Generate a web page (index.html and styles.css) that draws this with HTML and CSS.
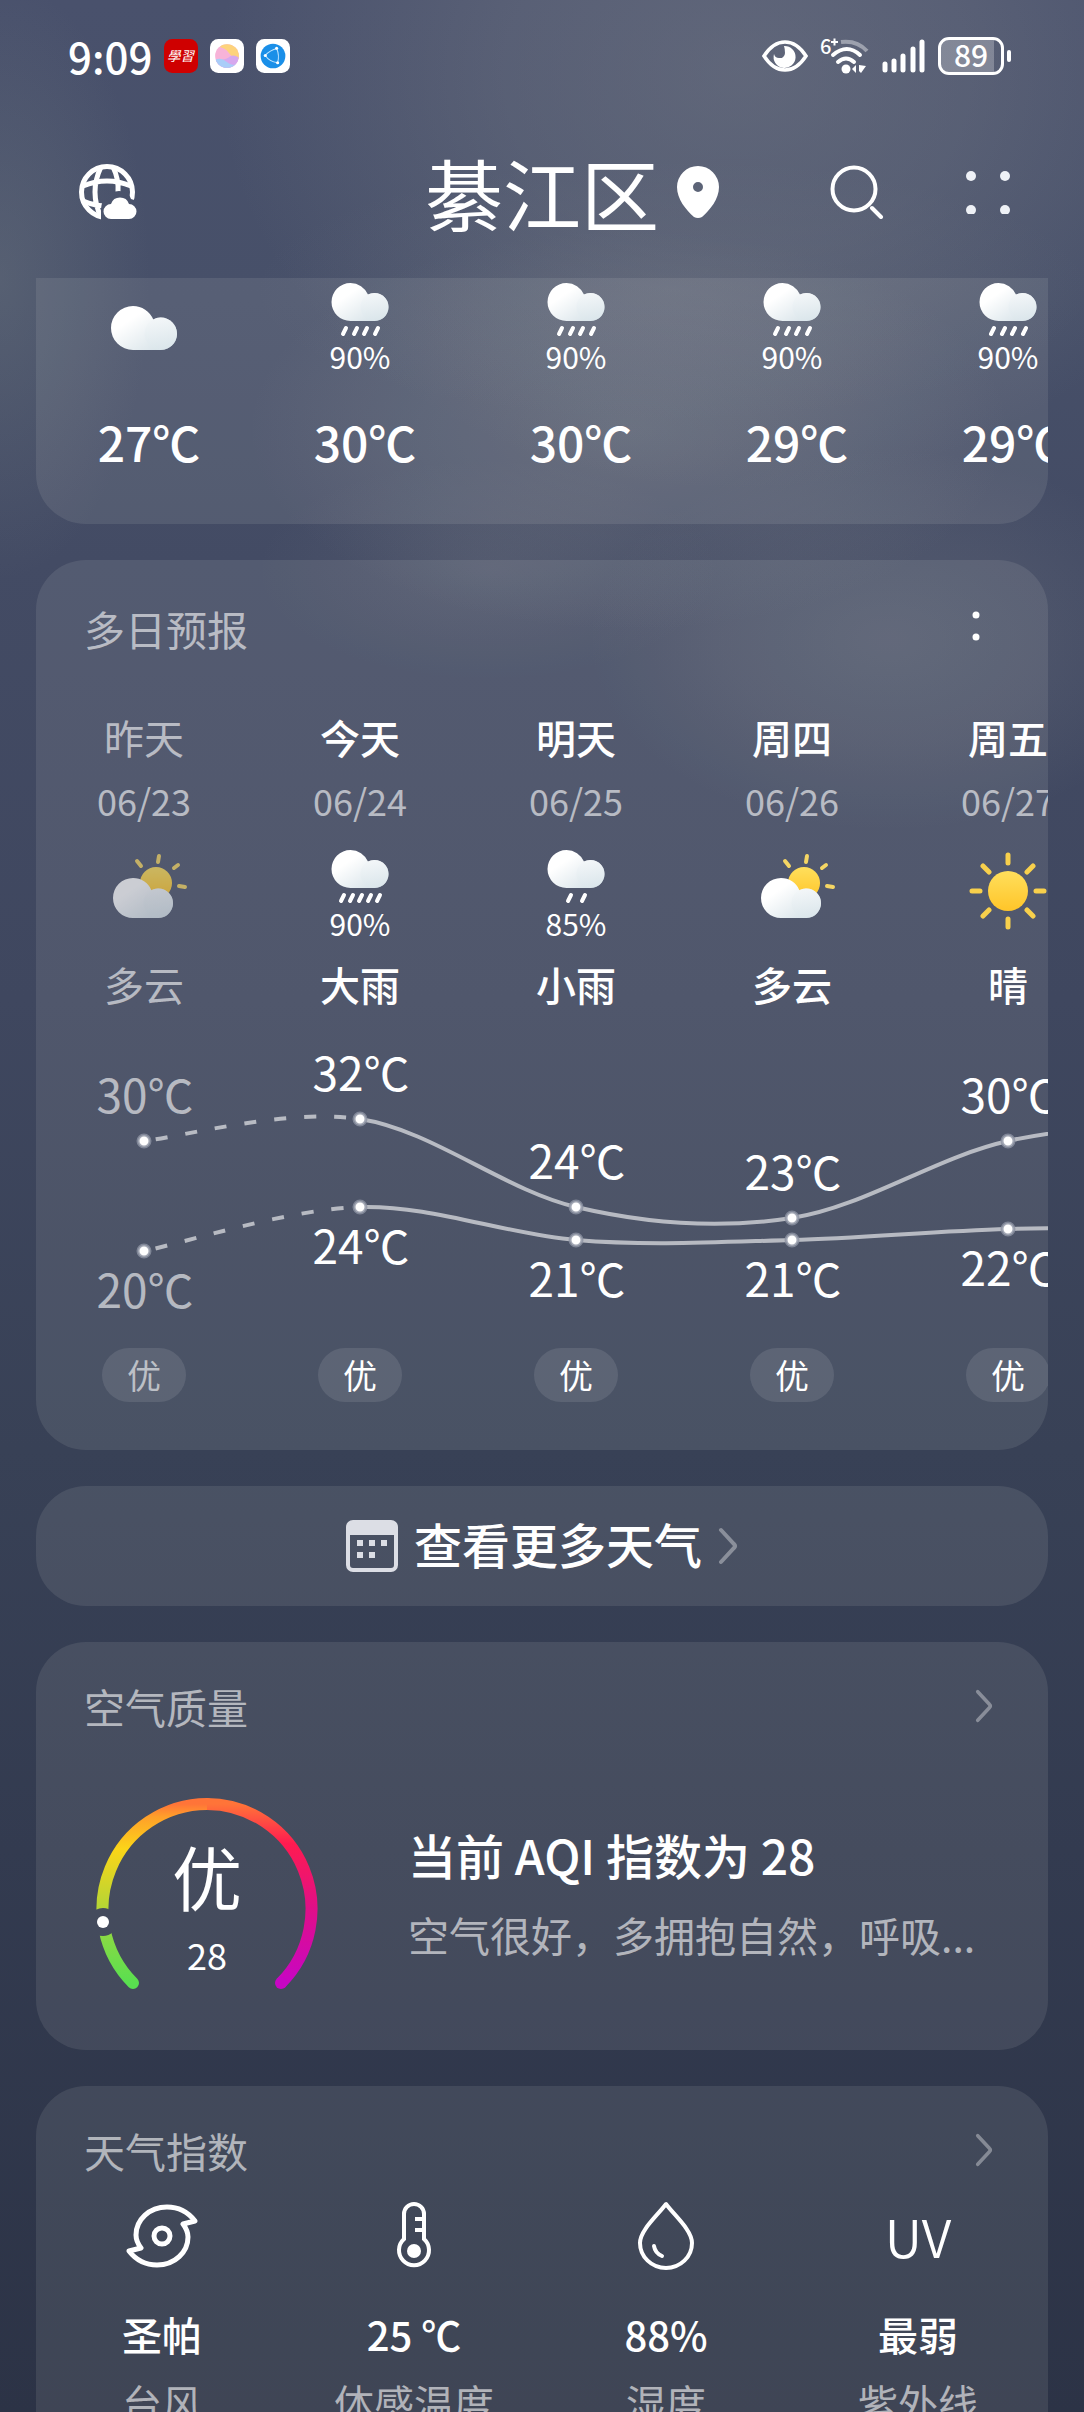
FILE: index.html
```html
<!DOCTYPE html>
<html lang="zh-CN">
<head>
  <meta charset="UTF-8">
  <meta name="viewport" content="width=device-width, initial-scale=1">
  <title>綦江区</title>
  <link rel="stylesheet" href="styles.css">
</head>
<body>
  <!-- shared symbols -->
  <svg class="sprite" aria-hidden="true">
    <defs>
      <linearGradient id="cloud-big" x1="0" y1="0" x2="1" y2="1">
        <stop offset="0.3" stop-color="#fff"/>
        <stop offset="1" stop-color="#cfdde4"/>
      </linearGradient>
      <linearGradient id="cloud-small" x1="0" y1="0" x2="0" y2="1">
        <stop offset="0" stop-color="#f4f7f9"/>
        <stop offset="1" stop-color="#dce7ec"/>
      </linearGradient>
      <linearGradient id="sun-fill" x1="0" y1="0" x2="0" y2="1">
        <stop offset="0" stop-color="#ffdf5c"/>
        <stop offset="1" stop-color="#ffc529"/>
      </linearGradient>
      <symbol id="cloud" viewBox="0 0 57 38">
        <path d="M19 0a19 19 0 0 1 17.500 11.600A14 14 0 1 1 43 38H19a19 19 0 0 1 0-38z" fill="url(#cloud-big)"/>
        <circle cx="43" cy="24" r="14" fill="url(#cloud-small)" opacity="0.7"/>
      </symbol>
      <symbol id="partly" viewBox="0 0 92 92">
        <circle cx="58" cy="33" r="16" fill="url(#sun-fill)"/>
        <path d="M60 12l1-6M43 16l-4-5M76 18l4-3M81 36l6 1" stroke="#f5d664" stroke-width="4" stroke-linecap="round"/>
        <use href="#cloud" x="15" y="28" width="60" height="40"/>
      </symbol>
      <symbol id="sunny" viewBox="0 0 92 92">
        <circle cx="46" cy="41" r="20" fill="url(#sun-fill)"/>
        <g stroke="#f8d04c" stroke-width="5" stroke-linecap="round">
          <path d="M46 13V5M46 77v-8M18 41h-8M82 41h-8M27 22l-6-6M65 22l6-6M27 60l-6 6M65 60l6 6"/>
        </g>
      </symbol>
      <symbol id="rain-2" viewBox="0 0 92 54">
        <use href="#cloud" x="17" y="0" width="58" height="38"/>
        <path d="M38 51l3-6M52 51l3-6" stroke="#fff" stroke-width="4" stroke-linecap="round"/>
      </symbol>
      <symbol id="rain-4" viewBox="0 0 92 54">
        <use href="#cloud" x="17" y="0" width="58" height="38"/>
        <path d="M29 51l3-6M40 51l3-6M50 51l3-6M61 51l3-6" stroke="#fff" stroke-width="4" stroke-linecap="round"/>
      </symbol>
      <symbol id="rain-5" viewBox="0 0 92 54">
        <use href="#cloud" x="17" y="0" width="58" height="38"/>
        <path d="M27 51l3-6M36 51l3-6M45 51l3-6M54 51l3-6M63 51l3-6" stroke="#fff" stroke-width="4" stroke-linecap="round"/>
      </symbol>
      <symbol id="chevron" viewBox="0 0 20 38">
        <path d="M3 3l13 14q2 2 0 4L3 35" fill="none" stroke="currentColor" stroke-width="4" stroke-linecap="round"/>
      </symbol>
    </defs>
  </svg>

  <div class="app">
    <div class="status-bar">
      <div class="status-left">
        <span class="clock">9:09</span>
        <svg class="app-icon" viewBox="0 0 33 33">
          <rect width="33" height="33" rx="8" fill="#cf0000"/>
          <text x="16" y="21" text-anchor="middle" class="app-text">學習</text>
        </svg>
        <svg class="app-icon" viewBox="0 0 33 33">
          <defs>
            <clipPath id="ball"><circle cx="16.500" cy="16.500" r="11.500"/></clipPath>
          </defs>
          <rect width="33" height="33" rx="8" fill="#fff"/>
          <g clip-path="url(#ball)">
            <rect width="33" height="33" fill="#f7b3d8"/>
            <path d="M10 4h20v16q-8-1-12-7-3-4-8-5z" fill="#fdd37c"/>
            <path d="M28 18q-6-4-10 0-4 3-14 2v12h24z" fill="#d6a8ee"/>
            <path d="M4 21q6-4 12 1t10 2v9H4z" fill="#a9cdf8"/>
          </g>
        </svg>
        <svg class="app-icon" viewBox="0 0 33 33">
          <rect width="33" height="33" rx="8" fill="#fff"/>
          <circle cx="16.500" cy="16.500" r="12" fill="#1a8fe8"/>
          <path d="M9 16Q13 11 21 9M9 16Q13 22 21 23M20 9q3 7 1 14" fill="none" stroke="#bfe4ff" stroke-width="1"/>
          <circle cx="9" cy="16" r="1.500" fill="#fff"/>
          <circle cx="20" cy="9" r="1.500" fill="#fff"/>
          <circle cx="21" cy="23" r="1.500" fill="#fff"/>
        </svg>
      </div>
      <div class="status-right">
        <svg width="46" height="32" viewBox="0 0 46 32">
          <path d="M2 16Q11 2 23 2t21 14Q35 30 23 30T2 16z" fill="none" stroke="#fff" stroke-width="3.500"/>
          <path d="M22 6a11 11 0 1 1-10 8q1 4 5 4a5 5 0 0 0 6-5q0-4-1-7z" fill="#fff"/>
        </svg>
        <svg width="50" height="38" viewBox="0 0 50 38">
          <text x="0" y="17" class="wifi-text">6</text>
          <path d="M11 5h7M14.500 1.500v7" stroke="#fff" stroke-width="2"/>
          <path d="M21 5q16-2 26 9" fill="none" stroke="#fff" stroke-opacity="0.4" stroke-width="4"/>
          <path d="M13 18q14-12 27 0" fill="none" stroke="#fff" stroke-width="4" stroke-linecap="round"/>
          <path d="M18 25q8-7 16 0" fill="none" stroke="#fff" stroke-width="4" stroke-linecap="round"/>
          <circle cx="26" cy="32" r="4.500" fill="#fff"/>
          <path d="M32 32l4-4v8zM39 28l7 1-5 7-2-2z" fill="#fff"/>
        </svg>
        <svg width="44" height="34" viewBox="0 0 44 34">
          <path d="M3 31v-6M12 31V22M21 31V17M31 31V10M40 31V3" stroke="#fff" stroke-width="5" stroke-linecap="round"/>
        </svg>
        <div class="battery"><span>89</span></div>
      </div>
    </div>

    <header class="top-bar">
      <button class="icon-btn" type="button" aria-label="城市">
        <svg width="66" height="58" viewBox="0 0 66 58">
          <defs>
            <mask id="globe-cut">
              <rect width="66" height="58" fill="#fff"/>
              <path d="M27 60V46q0-8 7-10 3-8 11-8 9 0 12 8 6 1 9 6v18z" fill="#000"/>
            </mask>
          </defs>
          <g mask="url(#globe-cut)" fill="none" stroke="#fff" stroke-width="5">
            <circle cx="33" cy="29" r="25.500"/>
            <path d="M27 4Q15 29 27 54M39 4q6 12 5 26M9 23Q33 13 57 23M9 38q12 5 24 5"/>
          </g>
          <path d="M37 56a7.500 7.500 0 0 1 0-15 9.500 9.500 0 0 1 18 0 7.500 7.500 0 0 1 0 15z" fill="#fff"/>
        </svg>
      </button>
      <h1>綦江区</h1>
      <div class="top-right">
        <svg class="pin" width="42" height="52" viewBox="0 0 42 52">
          <path d="M21 0a21 21 0 0 1 21 21c0 12-9 23-17 30q-4 2-8 0C9 44 0 33 0 21A21 21 0 0 1 21 0zm0 16a5 5 0 1 0 0 10 5 5 0 0 0 0-10z" fill="#fff"/>
        </svg>
        <div class="actions">
          <button class="icon-btn" type="button" aria-label="搜索">
            <svg width="54" height="54" viewBox="0 0 54 54">
              <circle cx="24" cy="24" r="21.500" fill="none" stroke="#fff" stroke-width="4"/>
              <path d="M42 43l9 9" stroke="#fff" stroke-width="4" stroke-linecap="round"/>
            </svg>
          </button>
          <button class="icon-btn" type="button" aria-label="菜单">
            <svg width="44" height="44" viewBox="0 0 44 44" fill="#eef1f6">
              <circle cx="5" cy="6" r="5"/><circle cx="39" cy="6" r="5"/>
              <circle cx="5" cy="40" r="5"/><circle cx="39" cy="40" r="5"/>
            </svg>
          </button>
        </div>
      </div>
    </header>

    <main class="content">
      <section class="card hourly">
        <ul class="columns">
          <li class="col">
            <div class="slot"><svg width="92" height="92" viewBox="0 0 92 92"><use href="#cloud" x="13" y="23" width="66" height="44"/></svg></div>
            <span class="hour-temp">27℃</span>
          </li>
          <li class="col">
            <div class="slot"><svg width="92" height="54"><use href="#rain-4"/></svg><span class="chance">90%</span></div>
            <span class="hour-temp">30℃</span>
          </li>
          <li class="col">
            <div class="slot"><svg width="92" height="54"><use href="#rain-4"/></svg><span class="chance">90%</span></div>
            <span class="hour-temp">30℃</span>
          </li>
          <li class="col">
            <div class="slot"><svg width="92" height="54"><use href="#rain-4"/></svg><span class="chance">90%</span></div>
            <span class="hour-temp">29℃</span>
          </li>
          <li class="col">
            <div class="slot"><svg width="92" height="54"><use href="#rain-4"/></svg><span class="chance">90%</span></div>
            <span class="hour-temp">29℃</span>
          </li>
        </ul>
      </section>

      <section class="card daily">
        <div class="card-head">
          <h2>多日预报</h2>
          <button class="icon-btn" type="button" aria-label="更多">
            <svg width="36" height="36" viewBox="0 0 36 36" fill="#fff">
              <circle cx="18" cy="5" r="3.500"/><circle cx="18" cy="27" r="3.500"/>
            </svg>
          </button>
        </div>
        <ul class="columns">
          <li class="col past">
            <span class="day">昨天</span><span class="date">06/23</span>
            <div class="slot"><svg width="92" height="92"><use href="#partly"/></svg></div>
            <span class="day">多云</span>
          </li>
          <li class="col">
            <span class="day">今天</span><span class="date">06/24</span>
            <div class="slot"><svg width="92" height="54"><use href="#rain-5"/></svg><span class="chance">90%</span></div>
            <span class="day">大雨</span>
          </li>
          <li class="col">
            <span class="day">明天</span><span class="date">06/25</span>
            <div class="slot"><svg width="92" height="54"><use href="#rain-2"/></svg><span class="chance">85%</span></div>
            <span class="day">小雨</span>
          </li>
          <li class="col">
            <span class="day">周四</span><span class="date">06/26</span>
            <div class="slot"><svg width="92" height="92"><use href="#partly"/></svg></div>
            <span class="day">多云</span>
          </li>
          <li class="col">
            <span class="day">周五</span><span class="date">06/27</span>
            <div class="slot"><svg width="92" height="92"><use href="#sunny"/></svg></div>
            <span class="day">晴</span>
          </li>
        </ul>

        <!-- 216px per day, 11px per degree -->
        <svg class="chart" width="1080" height="338" viewBox="0 0 1080 338">
          <g class="line">
            <path class="dashed" d="M108 131C144 127 252 98 324 109"/>
            <path d="M324 109C396 120 468 180 540 197S684 219 756 208 900 147 972 131 1152 111 1188 109"/>
            <path class="dashed" d="M108 241C144 234 252 199 324 197"/>
            <path d="M324 197C396 195 468 224 540 230S684 232 756 230 900 221 972 219 1152 219 1188 219"/>
          </g>
          <g class="points">
            <circle cx="108" cy="131" r="6"/><circle cx="324" cy="109" r="6"/><circle cx="540" cy="197" r="6"/><circle cx="756" cy="208" r="6"/><circle cx="972" cy="131" r="6"/>
            <circle cx="108" cy="241" r="6"/><circle cx="324" cy="197" r="6"/><circle cx="540" cy="230" r="6"/><circle cx="756" cy="230" r="6"/><circle cx="972" cy="219" r="6"/>
          </g>
          <g class="temps">
            <text class="past-temp" x="109" y="103">30℃</text>
            <text x="325" y="81">32℃</text>
            <text x="541" y="169">24℃</text>
            <text x="757" y="180">23℃</text>
            <text x="973" y="103">30℃</text>
            <text class="past-temp" x="109" y="298">20℃</text>
            <text x="325" y="254">24℃</text>
            <text x="541" y="287">21℃</text>
            <text x="757" y="287">21℃</text>
            <text x="973" y="276">22℃</text>
          </g>
        </svg>

        <ul class="columns">
          <li class="col"><span class="badge muted">优</span></li>
          <li class="col"><span class="badge">优</span></li>
          <li class="col"><span class="badge">优</span></li>
          <li class="col"><span class="badge">优</span></li>
          <li class="col"><span class="badge">优</span></li>
        </ul>
      </section>

      <a class="card more" href="#more">
        <svg width="52" height="52" viewBox="0 0 52 52">
          <rect x="2" y="2" width="48" height="48" rx="5" fill="none" stroke="#dcdee5" stroke-width="4"/>
          <path d="M2 6q0-4 4-4h40q4 0 4 4v9H2z" fill="#dcdee5"/>
          <path d="M11 20h6v6h-6zM23 20h6v6h-6zM35 20h6v6h-6zM11 32h6v6h-6zM23 32h6v6h-6z" fill="#dcdee5"/>
        </svg>
        <span class="more-text">查看更多天气</span>
        <svg class="chevron" width="20" height="38"><use href="#chevron"/></svg>
      </a>

      <section class="card">
        <div class="card-head">
          <h2>空气质量</h2>
          <a class="chevron" href="#aqi" aria-label="空气质量"><svg width="20" height="34"><use href="#chevron"/></svg></a>
        </div>
        <div class="aqi">
          <div class="gauge">
            <svg width="222" height="222" viewBox="0 0 222 222">
              <defs>
                <linearGradient id="arc-left" gradientUnits="userSpaceOnUse" x1="0" y1="186" x2="0" y2="6">
                  <stop offset="0" stop-color="#58df50"/>
                  <stop offset="0.250" stop-color="#86da45"/>
                  <stop offset="0.420" stop-color="#b4d535"/>
                  <stop offset="0.750" stop-color="#fbd518"/>
                  <stop offset="0.930" stop-color="#ff9f2a"/>
                  <stop offset="1" stop-color="#ff7438"/>
                </linearGradient>
                <linearGradient id="arc-right" gradientUnits="userSpaceOnUse" x1="0" y1="6" x2="0" y2="186">
                  <stop offset="0" stop-color="#ff7438"/>
                  <stop offset="0.220" stop-color="#ff1b50"/>
                  <stop offset="0.580" stop-color="#e00f88"/>
                  <stop offset="1" stop-color="#c706c4"/>
                </linearGradient>
                <mask id="arc-cut">
                  <rect width="222" height="222" fill="#fff"/>
                  <circle cx="7" cy="124" r="14" fill="#000"/>
                </mask>
              </defs>
              <g fill="none" stroke-width="12">
                <path d="M37 185A105 105 0 0 1 111 6" stroke="url(#arc-left)" stroke-linecap="round" mask="url(#arc-cut)"/>
                <path d="M111 6A105 105 0 0 1 185 185" stroke="url(#arc-right)"/>
              </g>
              <circle cx="185" cy="185" r="6" fill="#c706c4"/>
              <circle cx="7" cy="124" r="6" fill="#fff"/>
            </svg>
            <div class="gauge-text">
              <span class="level">优</span>
              <span class="index">28</span>
            </div>
          </div>
          <div class="aqi-text">
            <p class="aqi-title">当前 AQI 指数为 28</p>
            <p class="aqi-tip">空气很好，多拥抱自然，呼吸...</p>
          </div>
        </div>
      </section>

      <section class="card">
        <div class="card-head">
          <h2>天气指数</h2>
          <a class="chevron" href="#index" aria-label="天气指数"><svg width="20" height="34"><use href="#chevron"/></svg></a>
        </div>
        <ul class="indexes">
          <li>
            <svg width="72" height="72" viewBox="0 -4 72 72" fill="none" stroke="#fff" stroke-width="5" stroke-linejoin="round">
              <path d="M57 20L69 17C62 8 52 3 41 3 23 3 10 16 10 31c0 5 2 9 5 13L3 47c7 9 17 14 28 14 18 0 31-13 31-28 0-5-2-9-5-13z"/>
              <circle cx="36" cy="32" r="8"/>
            </svg>
            <strong>圣帕</strong><span class="muted">台风</span>
          </li>
          <li>
            <svg width="36" height="72" viewBox="0 -2 36 72" fill="none" stroke="#fff" stroke-width="4">
              <path d="M8 37V12a10 10 0 0 1 20 0v25a15 15 0 1 1-20 0zM19 17h8M19 28h8"/>
              <circle cx="18" cy="49" r="7" fill="#fff" stroke="none"/>
            </svg>
            <strong>25 ℃</strong><span class="muted">体感温度</span>
          </li>
          <li>
            <svg width="60" height="72" viewBox="0 -1 60 72" fill="none" stroke="#fff" stroke-width="4" stroke-linejoin="round" stroke-linecap="round">
              <path d="M30 3C22 14 4 29 4 42a26 25 0 0 0 52 0C56 29 38 14 30 3zM18 45q1 7 8 10"/>
            </svg>
            <strong>88%</strong><span class="muted">湿度</span>
          </li>
          <li>
            <span class="uv">UV</span>
            <strong>最弱</strong><span class="muted">紫外线</span>
          </li>
        </ul>
      </section>
    </main>
  </div>
</body>
</html>
```
FILE: styles.css
```css
* {
  box-sizing: border-box;
}
body {
  margin: 0;
  color: #fff;
  font-family: "Noto Sans CJK SC", "Noto Sans", sans-serif;
  font-size: 40px;
  line-height: 56px;
}
h1, h2, p, ul {
  margin: 0;
  padding: 0;
  font-weight: 400;
}
ul {
  list-style: none;
}
a {
  color: inherit;
  text-decoration: none;
}
svg {
  display: block;
  flex: none;
}
.sprite {
  position: absolute;
  width: 0;
  height: 0;
}

/* cloudy sky behind everything */
.app {
  height: 100vh;
  overflow: hidden;
  display: flex;
  flex-direction: column;
  background:
    radial-gradient(520px 420px at 68% 70px, rgba(145,148,152,0.32), rgba(145,148,152,0.22) 45%, transparent),
    radial-gradient(420px 130px at 62% 290px, rgba(145,148,152,0.14), transparent),
    radial-gradient(380px 200px at 58% 430px, rgba(145,148,152,0.28), rgba(145,148,152,0.14) 55%, transparent),
    radial-gradient(230px 110px at 45% 570px, rgba(145,148,152,0.16), transparent),
    radial-gradient(300px 190px at 82% 640px, rgba(145,148,152,0.22), rgba(145,148,152,0.12) 55%, transparent),
    radial-gradient(150px 300px at 0 280px, rgba(130,140,140,0.26), transparent),
    linear-gradient(#49516c 0, #475069 300px, #434b64 560px, #3f475f 1000px, #384156 1450px, #333b50 1850px, #2c3346 2412px);
}
.muted {
  color: rgba(255,255,255,0.6);
}

/* status bar */
.status-bar {
  flex: none;
  height: 112px;
  padding: 0 74px 0 68px;
  display: flex;
  align-items: center;
  justify-content: space-between;
}
.status-left,
.status-right {
  display: flex;
  align-items: center;
  gap: 12px;
}
.clock {
  font-size: 42px;
  font-weight: 500;
}
.app-icon {
  width: 34px;
  height: 34px;
}
.app-text {
  font-size: 13px;
  font-style: italic;
  fill: #fff;
}
.wifi-text {
  font-size: 20px;
  font-weight: 500;
  fill: #fff;
}
.battery {
  position: relative;
  width: 66px;
  height: 38px;
  margin-right: 6px;
  border: 3px solid #fff;
  border-radius: 11px;
  background: linear-gradient(to right, rgba(255,255,255,0.25) 88%, transparent 88%);
  font-size: 30px;
  font-weight: 500;
  line-height: 28px;
  text-align: center;
}
.battery::after {
  content: "";
  position: absolute;
  top: 10px;
  right: -10px;
  width: 4px;
  height: 12px;
  border-radius: 2px;
  background: #fff;
}

/* title bar */
.top-bar {
  flex: none;
  height: 160px;
  margin-bottom: 6px;
  padding: 0 74px;
  display: grid;
  grid-template-columns: 1fr auto 1fr;
  align-items: center;
}
h1 {
  font-size: 78px;
  line-height: 112px;
}
.icon-btn {
  padding: 0;
  border: 0;
  background: none;
  cursor: pointer;
}
.top-right {
  display: flex;
  align-items: center;
  justify-content: space-between;
}
.pin {
  margin-left: 18px;
}
.actions {
  display: flex;
  align-items: center;
  gap: 82px;
}

/* cards */
.content {
  flex: 1;
  min-height: 0;
  overflow: hidden;
  display: flex;
  flex-direction: column;
  gap: 36px;
  padding: 0 36px;
}
.card {
  flex: none;
  border-radius: 50px;
  background: rgba(250,255,242,0.09);
  overflow: hidden;
}
.card-head {
  display: flex;
  align-items: center;
  justify-content: space-between;
  padding: 36px 54px 0 48px;
}
.card-head h2 {
  font-size: 41px;
  color: rgba(255,255,255,0.6);
}
.chevron {
  color: rgba(255,255,255,0.36);
}

.columns {
  display: flex;
}
.col {
  flex: none;
  width: 216px;
  display: flex;
  flex-direction: column;
  align-items: center;
}
.slot {
  height: 92px;
  display: flex;
  flex-direction: column;
  align-items: center;
}
.chance {
  font-size: 30px;
  line-height: 38px;
}

.hourly {
  border-radius: 0 0 50px 50px;
  padding: 5px 0 55px;
}
.hour-temp {
  margin-top: 38px;
  padding-left: 10px;
  font-size: 48px;
  font-weight: 500;
}

.daily {
  padding-bottom: 48px;
}
.daily .card-head {
  padding-top: 40px;
  margin-bottom: 53px;
}
.day {
  font-weight: 500;
}
.date {
  margin-top: 11px;
  font-size: 36px;
  line-height: 48px;
  color: rgba(255,255,255,0.6);
}
.daily .slot {
  margin: 26px 0 14px;
}
.chart {
  margin-top: -2px;
}
.past .day {
  font-weight: 400;
  color: rgba(255,255,255,0.6);
}
.past .slot {
  opacity: 0.7;
}
.line {
  fill: none;
  stroke: rgba(255,255,255,0.6);
  stroke-width: 4;
}
.dashed {
  stroke-dasharray: 12 18;
  stroke-dashoffset: -12;
}
.points {
  fill: #fff;
  stroke: rgba(140,146,162,0.8);
  stroke-width: 3;
}
.temps {
  fill: #fff;
  font-size: 46px;
  text-anchor: middle;
}
.temps .past-temp {
  fill: rgba(255,255,255,0.6);
}
.badge {
  width: 84px;
  border-radius: 27px;
  background: rgba(255,255,255,0.1);
  font-size: 34px;
  line-height: 54px;
  text-align: center;
}

.more {
  height: 120px;
  display: flex;
  align-items: center;
  justify-content: center;
  gap: 16px;
  font-size: 48px;
}
.more-text {
  padding-bottom: 6px;
  font-weight: 500;
}

/* air quality */
.aqi {
  display: flex;
  padding: 64px 48px 30px 60px;
}
.gauge {
  display: grid;
  margin-right: 90px;
}
.gauge svg,
.gauge-text {
  grid-area: 1 / 1;
}
.gauge-text {
  display: flex;
  flex-direction: column;
  align-items: center;
  padding-top: 32px;
}
.level {
  font-size: 70px;
  line-height: 92px;
}
.index {
  font-size: 36px;
  line-height: 64px;
}
.aqi-text {
  flex: 1;
  min-width: 0;
  white-space: nowrap;
  padding-top: 28px;
}
.aqi-title {
  margin-bottom: 24px;
  font-size: 48px;
  font-weight: 500;
}
.aqi-tip {
  font-size: 41px;
  color: rgba(255,255,255,0.6);
}

/* weather indexes */
.indexes {
  display: grid;
  grid-template-columns: repeat(4, 1fr);
  padding: 22px 4px 48px 0;
}
.indexes li {
  display: flex;
  flex-direction: column;
  align-items: center;
}
.indexes strong {
  margin: 34px 0 12px;
  font-weight: 500;
}
.uv {
  font-size: 52px;
  font-weight: 350;
  line-height: 72px;
}
```
